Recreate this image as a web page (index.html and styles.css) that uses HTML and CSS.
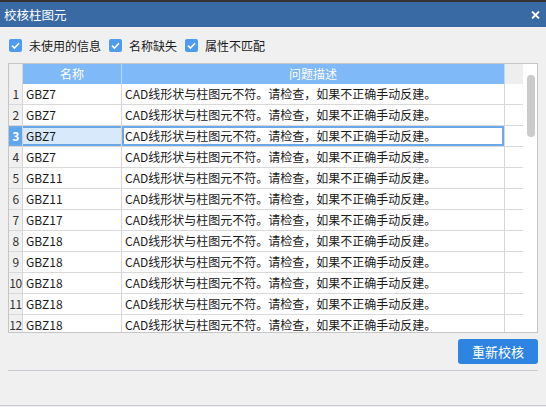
FILE: index.html
```html
<!DOCTYPE html>
<html lang="zh-CN">
<head>
<meta charset="utf-8">
<title>校核柱图元</title>
<link rel="stylesheet" href="styles.css">
</head>
<body>
<div class="topstrip"></div>
<div class="titlebar">
  <span class="title">校核柱图元</span>
  <svg class="close" width="9" height="8" viewBox="0 0 9 8"><path d="M1 0.5 L8 7.5 M8 0.5 L1 7.5" stroke="#fff" stroke-width="1.8" fill="none"/></svg>
</div>
<div class="content">
  <div class="filters">
    <label class="chk"><span class="box"><svg width="13" height="13" viewBox="0 0 13 13"><path d="M3 6.6 L5.4 9 L10 4.3" stroke="#fff" stroke-width="1.6" fill="none"/></svg></span>未使用的信息</label>
    <label class="chk"><span class="box"><svg width="13" height="13" viewBox="0 0 13 13"><path d="M3 6.6 L5.4 9 L10 4.3" stroke="#fff" stroke-width="1.6" fill="none"/></svg></span>名称缺失</label>
    <label class="chk"><span class="box"><svg width="13" height="13" viewBox="0 0 13 13"><path d="M3 6.6 L5.4 9 L10 4.3" stroke="#fff" stroke-width="1.6" fill="none"/></svg></span>属性不匹配</label>
  </div>
  <div class="grid">
    <div class="table">
      <div class="row head">
        <div class="c num"></div>
        <div class="c name">名称</div>
        <div class="c desc">问题描述</div>
        <div class="c fill"></div>
      </div>
      <div class="body">
        <div class="row"><div class="c num">1</div><div class="c name">GBZ7</div><div class="c desc">CAD线形状与柱图元不符。请检查，如果不正确手动反建。</div><div class="c fill"></div></div>
        <div class="row"><div class="c num">2</div><div class="c name">GBZ7</div><div class="c desc">CAD线形状与柱图元不符。请检查，如果不正确手动反建。</div><div class="c fill"></div></div>
        <div class="row sel"><div class="c num">3</div><div class="c name">GBZ7</div><div class="c desc">CAD线形状与柱图元不符。请检查，如果不正确手动反建。</div><div class="c fill"></div></div>
        <div class="row"><div class="c num">4</div><div class="c name">GBZ7</div><div class="c desc">CAD线形状与柱图元不符。请检查，如果不正确手动反建。</div><div class="c fill"></div></div>
        <div class="row"><div class="c num">5</div><div class="c name">GBZ11</div><div class="c desc">CAD线形状与柱图元不符。请检查，如果不正确手动反建。</div><div class="c fill"></div></div>
        <div class="row"><div class="c num">6</div><div class="c name">GBZ11</div><div class="c desc">CAD线形状与柱图元不符。请检查，如果不正确手动反建。</div><div class="c fill"></div></div>
        <div class="row"><div class="c num">7</div><div class="c name">GBZ17</div><div class="c desc">CAD线形状与柱图元不符。请检查，如果不正确手动反建。</div><div class="c fill"></div></div>
        <div class="row"><div class="c num">8</div><div class="c name">GBZ18</div><div class="c desc">CAD线形状与柱图元不符。请检查，如果不正确手动反建。</div><div class="c fill"></div></div>
        <div class="row"><div class="c num">9</div><div class="c name">GBZ18</div><div class="c desc">CAD线形状与柱图元不符。请检查，如果不正确手动反建。</div><div class="c fill"></div></div>
        <div class="row"><div class="c num">10</div><div class="c name">GBZ18</div><div class="c desc">CAD线形状与柱图元不符。请检查，如果不正确手动反建。</div><div class="c fill"></div></div>
        <div class="row"><div class="c num">11</div><div class="c name">GBZ18</div><div class="c desc">CAD线形状与柱图元不符。请检查，如果不正确手动反建。</div><div class="c fill"></div></div>
        <div class="row"><div class="c num">12</div><div class="c name">GBZ18</div><div class="c desc">CAD线形状与柱图元不符。请检查，如果不正确手动反建。</div><div class="c fill"></div></div>
      </div>
    </div>
    <div class="vscroll"><div class="thumb"></div></div>
  </div>
  <div class="actions">
    <button class="btn">重新校核</button>
  </div>
  <div class="sep"></div>
</div>
<div class="bottomline"></div>
</body>
</html>
```

FILE: styles.css
```css
html, body {
  margin: 0;
  padding: 0;
}
body {
  width: 546px;
  height: 407px;
  overflow: hidden;
  background: #f0f0f0;
  font-family: "Noto Sans CJK SC", "Noto Sans", sans-serif;
  font-size: 12px;
  color: #1a1a1a;
  position: relative;
}
.topstrip {
  height: 2px;
  background: #333333;
}
.titlebar {
  height: 25px;
  background: #3a6aa4;
  display: flex;
  align-items: center;
  justify-content: space-between;
  padding: 0 6px 0 4px;
  color: #ffffff;
}
.title {
  font-size: 12.5px;
  line-height: 25px;
}
.close {
  display: block;
  margin-top: 1px;
}
.content {
  padding: 0 8px;
}
.filters {
  display: flex;
  align-items: center;
  height: 13px;
  padding-top: 12px;
  gap: 8px;
  margin-left: 1px;
}
.chk {
  display: flex;
  align-items: center;
  gap: 7px;
  line-height: 13px;
  color: #1a1a1a;
}
.box {
  width: 13px;
  height: 13px;
  background: #4d9cf0;
  border-radius: 2px;
  display: block;
}
.box svg {
  display: block;
}
.grid {
  margin-top: 11px;
  border: 1px solid #c6c6c6;
  height: 268px;
  display: flex;
  background: #ffffff;
}
.table {
  flex: 1;
  display: flex;
  flex-direction: column;
  overflow: hidden;
}
.body {
  flex: 1;
  overflow: hidden;
}
.row {
  display: flex;
  height: 21px;
  box-sizing: border-box;
  border-bottom: 1px solid #d9d9d9;
}
.c {
  box-sizing: border-box;
  height: 20px;
  line-height: 20px;
  white-space: nowrap;
  overflow: hidden;
  border-right: 1px solid #d6d6d6;
}
.num {
  width: 14px;
  background: #f0f0f0;
  text-align: center;
  color: #333;
  font-size: 12px;
  letter-spacing: -0.5px;
}
.name {
  width: 99px;
  padding-left: 3px;
}
.desc {
  width: 383px;
  padding-left: 3px;
}
.fill {
  flex: 1;
  border-right: none;
}
.row.head {
  height: 20px;
  border-bottom: none;
}
.head .c {
  color: #ffffff;
  text-align: center;
  padding-left: 0;
  border-right: 1px solid #b9d8fb;
}
.head .num {
  background: #f0f0f0;
  border-right: 1px solid #d6d6d6;
}
.head .name, .head .desc {
  background: #80b9f8;
}
.head .fill {
  background: #eeeeee;
  border-right: none;
}
.row.sel .num {
  background: #5ea6f2;
  color: #ffffff;
  font-weight: bold;
  box-shadow: inset 0 2px 0 #6aa8ea, inset 0 -2px 0 #6aa8ea;
}
.row.sel .name {
  background: #d8e9fc;
  box-shadow: inset 0 2px 0 #6aa8ea, inset 0 -2px 0 #6aa8ea;
}
.row.sel .desc {
  box-shadow: inset 0 0 0 2px #6aa8ea;
}
.vscroll {
  width: 14px;
  background: #ffffff;
  position: relative;
}
.thumb {
  position: absolute;
  left: 4px;
  top: 11px;
  width: 8px;
  height: 62px;
  border-radius: 4px;
  background: #cbcbcb;
}
.actions {
  display: flex;
  justify-content: flex-end;
  padding-top: 6px;
}
.btn {
  width: 80px;
  height: 25px;
  border: none;
  border-radius: 3px;
  background: #2e84e0;
  color: #ffffff;
  font-family: "Noto Sans CJK SC", sans-serif;
  font-size: 13px;
  padding: 0;
  line-height: 25px;
}
.sep {
  margin-top: 6px;
  height: 1px;
  background: #c6cbd3;
}
.bottomline {
  position: absolute;
  left: 0;
  right: 0;
  top: 405px;
  height: 1px;
  background: #c6cbd3;
}
```
